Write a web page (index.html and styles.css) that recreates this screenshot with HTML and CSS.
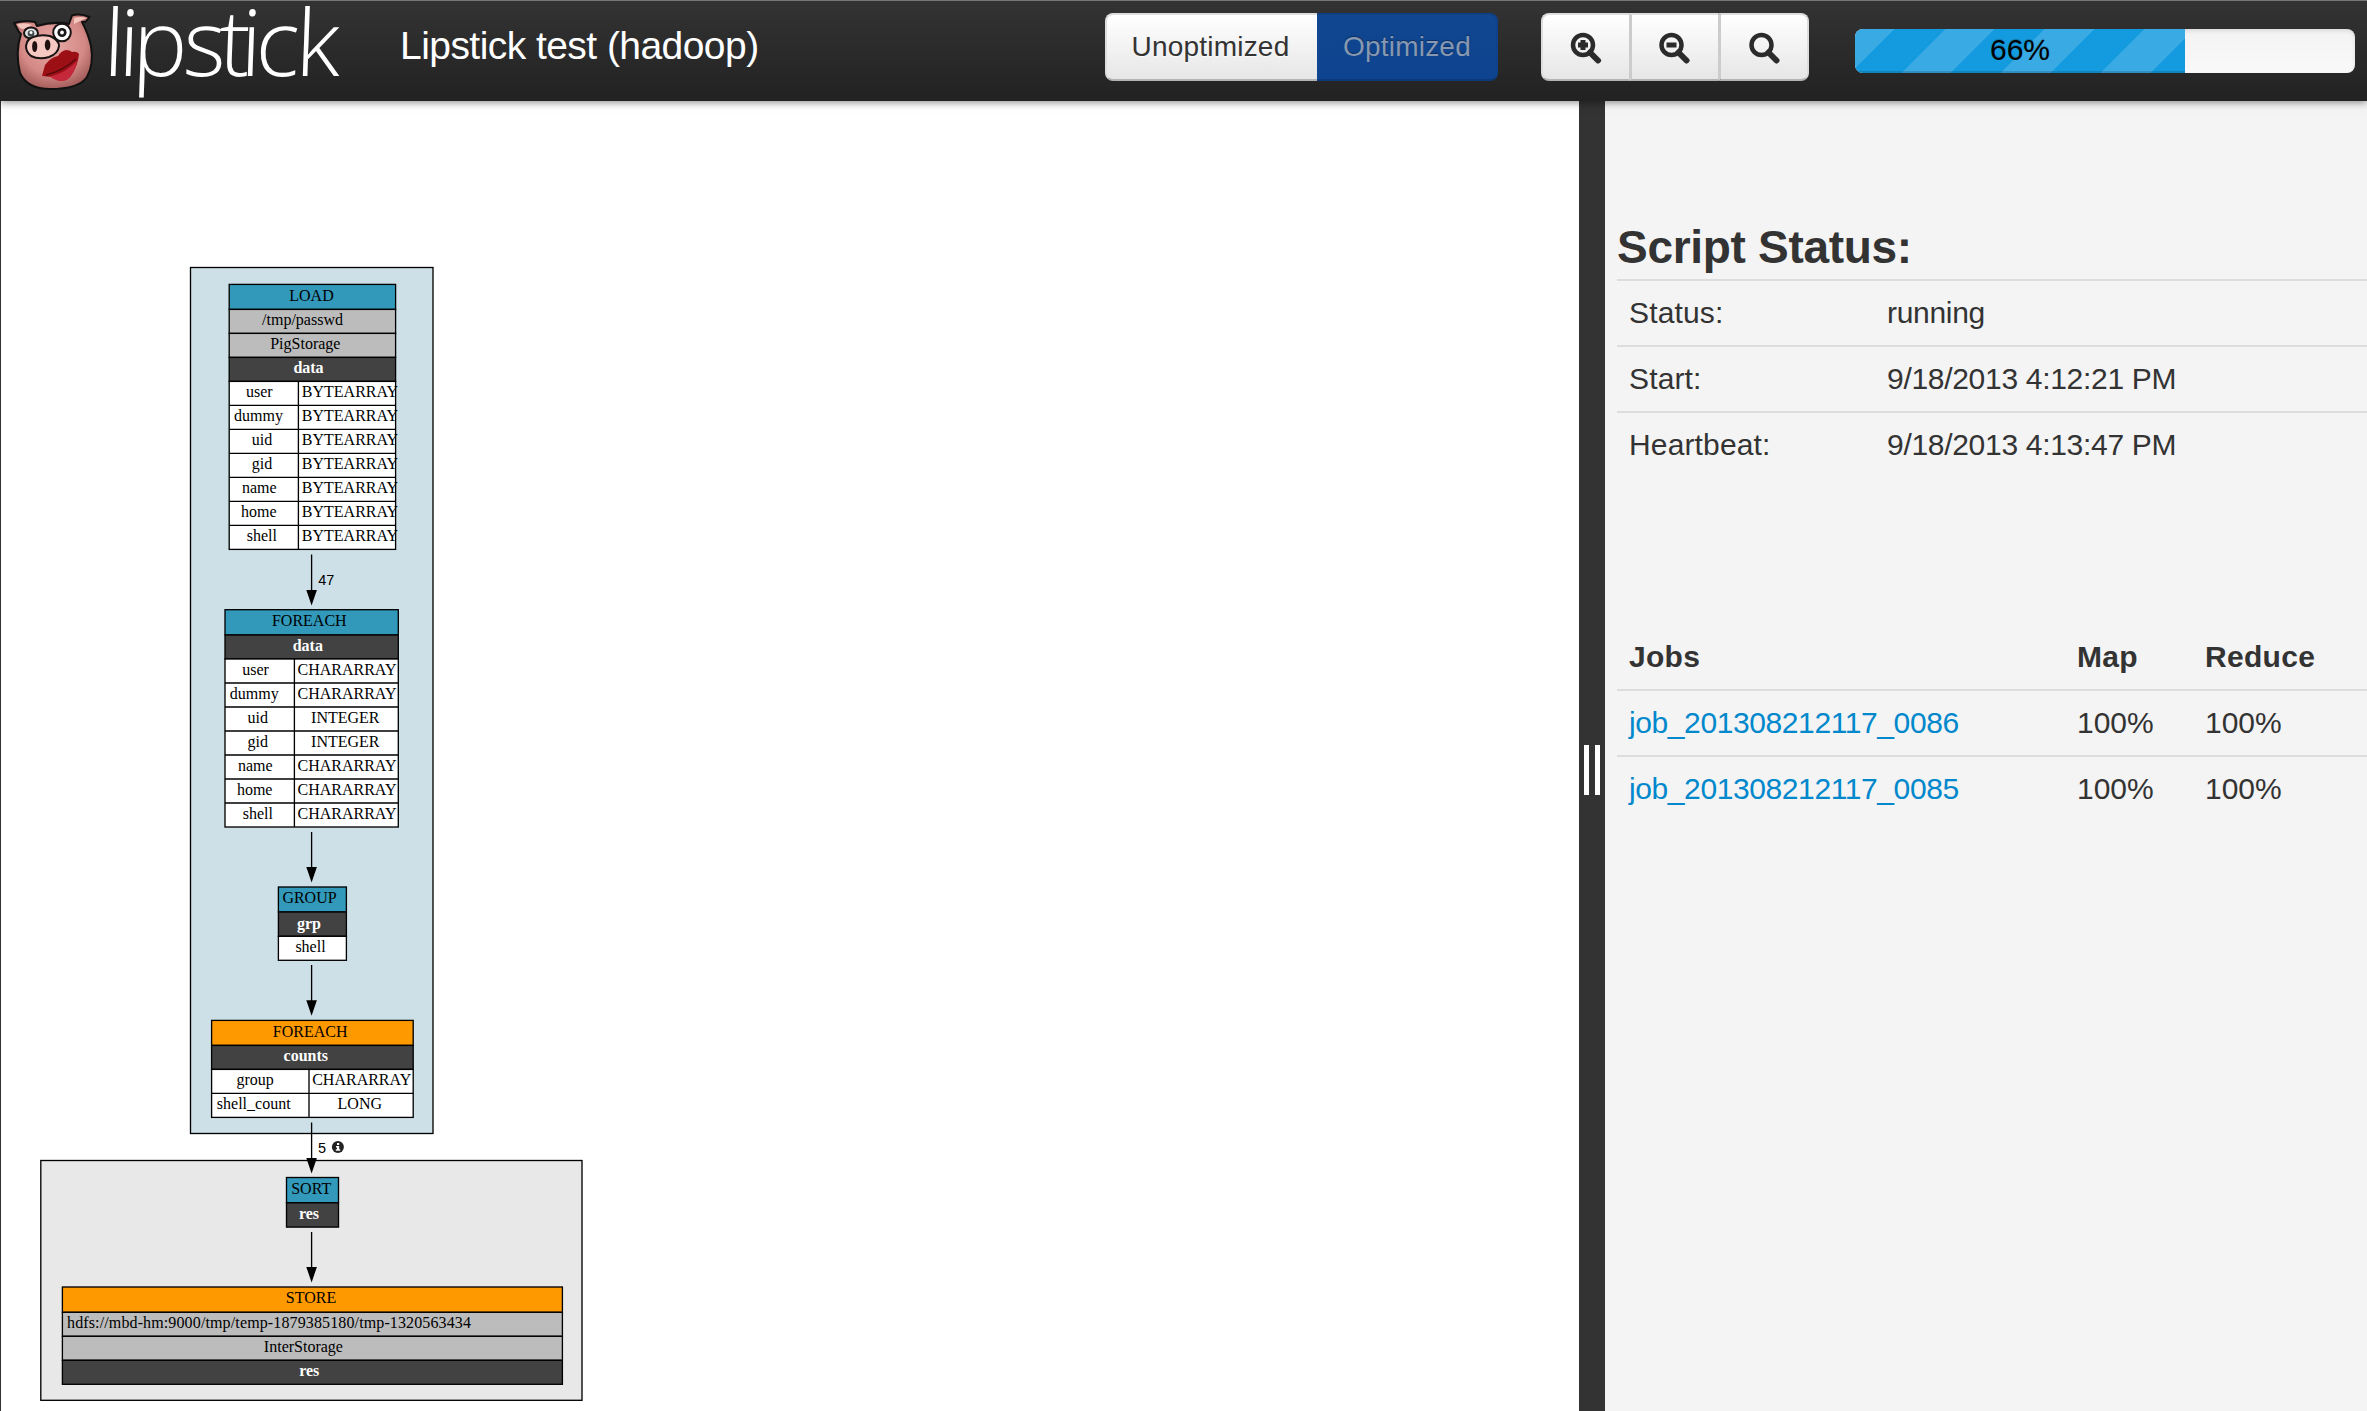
FILE: index.html
```html
<!DOCTYPE html>
<html lang="en">
<head>
<meta charset="utf-8">
<title>Lipstick test (hadoop)</title>
<link rel="stylesheet" href="styles.css">
</head>
<body>
<header class="navbar">
  <svg class="logo" width="350" height="100" viewBox="0 0 350 100" role="img" aria-label="lipstick">
    <defs>
      <radialGradient id="skin" cx=".5" cy=".4" r=".62">
        <stop offset="0" stop-color="#e9a9a5"/><stop offset=".65" stop-color="#d48a87"/><stop offset="1" stop-color="#a05a57"/>
      </radialGradient>
    </defs>
    <path class="pig-skin" d="M19 32 L14 23 Q24 20 35 22 L37 26 Q53 21 69 24 L72 15.500 Q80 13 89.500 17 L86 21.500 L82 22 Q88 33 91 46 Q94 64 87 77 Q79 89 50 89 Q27 89 20 73 Q15 52 21 34 Z"/>
    <path class="pig-ear" d="M17 24 Q25 22 32 25 L24 29 Q19 29 17 24 Z M74 18 Q81 16 87 18 L80 21 L74 24 Z"/>
    <ellipse class="pig-line" cx="31" cy="33" rx="7" ry="5.500" fill="#dfe3e3"/>
    <circle cx="31" cy="33.500" r="3.300" fill="#444b4e"/><circle cx="31" cy="32.500" r="1.500" fill="#fff"/>
    <circle class="pig-line" cx="62" cy="32.500" r="8.800" fill="#fff"/>
    <circle cx="62" cy="32.500" r="4.600" fill="#181818"/><circle cx="62" cy="32.500" r="1.900" fill="#fff"/>
    <path class="pig-line" d="M26 46 Q27 39 33 37 Q41 34 50 36 Q59 40 59 46 Q58 54 49 57 Q39 60 31 56 Q26 52 26 46 Z" fill="#f5c8c2"/>
    <ellipse cx="34.700" cy="46.500" rx="2.600" ry="5.600" fill="#20100f"/>
    <ellipse cx="47.600" cy="45" rx="2.800" ry="5.400" fill="#20100f"/>
    <path d="M42 76 L45 65 Q51 57 58 56 Q61 51 66 50 Q70 50 72 52 Q77 51 79 54 Q78 65 72 74 Q67 81 60 81 Q54 79 51 77 Z" fill="#9c0f15"/>
    <path d="M50 76.500 Q66 73 77 61 Q75 74 67 80 Q58 83 50 76.500 Z" fill="#c5283b"/>
    <path d="M46 75 Q63 71 76 59" fill="none" stroke="#56090e" stroke-width="1.300"/>
    <text class="wordmark" transform="translate(2.500 0) skewX(-2)" x="102.900 117.800 131.800 182.300 218.300 240 255 295" y="75.500">lipstick</text>
  </svg>
  <h1 class="script-name">Lipstick test (hadoop)</h1>
  <div class="btn-group plan-switch">
    <button class="btn">Unoptimized</button><button class="btn btn-active">Optimized</button>
  </div>
  <div class="btn-group zoom-tools">
    <button class="btn btn-icon" aria-label="Zoom in"><svg width="32" height="32" viewBox="0 0 32 32"><circle class="lens" cx="13" cy="13" r="10"/><path class="handle" d="M20 20.500 L28 28.500"/><path class="sign" d="M13 8v10M8 13h10"/></svg></button>
    <button class="btn btn-icon" aria-label="Zoom out"><svg width="32" height="32" viewBox="0 0 32 32"><circle class="lens" cx="12.500" cy="13" r="10"/><path class="handle" d="M19.500 20.500 L27.500 28.500"/><path class="sign" d="M7.500 13h10"/></svg></button>
    <button class="btn btn-icon" aria-label="Reset zoom"><svg width="32" height="32" viewBox="0 0 32 32"><circle class="lens" cx="13.500" cy="13" r="10"/><path class="handle" d="M20.500 20.500 L28.500 28.500"/></svg></button>
  </div>
  <div class="progress"><div class="bar" style="width:66%">66%</div></div>
</header>
<main class="workspace">
  <section class="canvas">
    <svg class="graph" width="1578" height="1310" viewBox="1 101 1578 1310">
      <rect class="cluster done" x="190.500" y="267.500" width="242.500" height="866"/>
      <rect class="cluster" x="40.800" y="1160.500" width="541.200" height="239.800"/>

      <g class="node">
        <rect class="op-map" x="229.200" y="284.400" width="166.400" height="25"/>
        <rect class="meta" x="229.200" y="309.400" width="166.400" height="24"/>
        <rect class="meta" x="229.200" y="333.400" width="166.400" height="24"/>
        <rect class="alias" x="229.200" y="357.400" width="166.400" height="24"/>
        <rect class="cells" x="229.200" y="381.400" width="166.400" height="168"/>
        <path class="rules" d="M298.400 381.400v168M229.200 405.400h166.400M229.200 429.400h166.400M229.200 453.400h166.400M229.200 477.400h166.400M229.200 501.400h166.400M229.200 525.400h166.400"/>
        <text x="311.500" y="300.700">LOAD</text><text x="302.500" y="325">/tmp/passwd</text><text x="305.300" y="349">PigStorage</text><text class="name" x="308.500" y="373">data</text>
        <text x="259.300" y="397">user</text><text x="350" y="397">BYTEARRAY</text>
        <text x="258.500" y="421">dummy</text><text x="350" y="421">BYTEARRAY</text>
        <text x="262" y="445">uid</text><text x="350" y="445">BYTEARRAY</text>
        <text x="262" y="469">gid</text><text x="350" y="469">BYTEARRAY</text>
        <text x="259.300" y="493">name</text><text x="350" y="493">BYTEARRAY</text>
        <text x="258.800" y="517">home</text><text x="350" y="517">BYTEARRAY</text>
        <text x="261.800" y="541">shell</text><text x="350" y="541">BYTEARRAY</text>
      </g>

      <g class="node">
        <rect class="op-map" x="225" y="609.700" width="173.300" height="25.300"/>
        <rect class="alias" x="225" y="635" width="173.300" height="24"/>
        <rect class="cells" x="225" y="659" width="173.300" height="168"/>
        <path class="rules" d="M294.400 659v168M225 683h173.300M225 707h173.300M225 731h173.300M225 755h173.300M225 779h173.300M225 803h173.300"/>
        <text x="309.300" y="626">FOREACH</text><text class="name" x="307.800" y="650.700">data</text>
        <text x="255.500" y="674.700">user</text><text x="347" y="674.700">CHARARRAY</text>
        <text x="254.300" y="698.700">dummy</text><text x="347" y="698.700">CHARARRAY</text>
        <text x="257.800" y="722.700">uid</text><text x="345.300" y="722.700">INTEGER</text>
        <text x="257.800" y="746.700">gid</text><text x="345.300" y="746.700">INTEGER</text>
        <text x="255.300" y="770.700">name</text><text x="347" y="770.700">CHARARRAY</text>
        <text x="254.700" y="794.700">home</text><text x="347" y="794.700">CHARARRAY</text>
        <text x="257.800" y="818.700">shell</text><text x="347" y="818.700">CHARARRAY</text>
      </g>

      <g class="node">
        <rect class="op-map" x="278.400" y="887" width="68" height="25"/>
        <rect class="alias" x="278.400" y="912" width="68" height="24.300"/>
        <rect class="cells" x="278.400" y="936.300" width="68" height="24"/>
        <text x="309.500" y="903">GROUP</text><text class="name" x="309" y="928.700">grp</text><text x="310.500" y="951.700">shell</text>
      </g>

      <g class="node">
        <rect class="op-reduce" x="211.600" y="1020.400" width="201.600" height="25"/>
        <rect class="alias" x="211.600" y="1045.400" width="201.600" height="24"/>
        <rect class="cells" x="211.600" y="1069.400" width="201.600" height="48"/>
        <path class="rules" d="M309 1069.400v48M211.600 1093.400h201.600"/>
        <text x="310.200" y="1037">FOREACH</text><text class="name" x="305.800" y="1061.300">counts</text>
        <text x="255.200" y="1085.300">group</text><text x="361.700" y="1085.300">CHARARRAY</text>
        <text x="253.700" y="1109.300">shell_count</text><text x="359.800" y="1109.300">LONG</text>
      </g>

      <g class="node">
        <rect class="op-map" x="286.500" y="1177.500" width="52" height="25.300"/>
        <rect class="alias" x="286.500" y="1202.800" width="52" height="24.300"/>
        <text x="311.200" y="1194">SORT</text><text class="name" x="309" y="1219.300">res</text>
      </g>

      <g class="node">
        <rect class="op-reduce" x="62.400" y="1287" width="500" height="25.300"/>
        <rect class="meta" x="62.400" y="1312.300" width="500" height="24"/>
        <rect class="meta" x="62.400" y="1336.300" width="500" height="24"/>
        <rect class="alias" x="62.400" y="1360.300" width="500" height="24"/>
        <text x="311" y="1303">STORE</text><text x="269" y="1328" textLength="404">hdfs://mbd-hm:9000/tmp/temp-1879385180/tmp-1320563434</text>
        <text x="303.400" y="1352.300">InterStorage</text><text class="name" x="309.200" y="1376.300">res</text>
      </g>

      <g class="edges">
        <path d="M311.600 554.500V592M311.600 832V869M311.600 965V1002M311.600 1122.400V1160M311.600 1232V1269"/>
        <path class="tip" d="M306.300 590h10.600l-5.300 15.500zM306.300 867h10.600l-5.300 15.500zM306.300 1000.300h10.600l-5.300 15.500zM306.300 1158h10.600l-5.300 15.500zM306.300 1267h10.600l-5.300 15.500z"/>
      </g>
      <text class="count" x="318.300" y="585">47</text>
      <text class="count" x="318" y="1152.700">5</text>
      <circle cx="337.900" cy="1147" r="6" fill="#222"/>
      <path d="M337 1143h2.200v2h-2.200zM336 1146h3.200v3.300h1v1.500h-4.400v-1.500h1.200v-1.800h-1z" fill="#fff"/>
    </svg>
  </section>
  <div class="splitter"><span class="grip"></span></div>
  <aside class="sidebar">
    <h2 class="panel-title">Script Status:</h2>
    <table class="table status">
      <tr><td class="label">Status:</td><td>running</td></tr>
      <tr><td class="label">Start:</td><td>9/18/2013 4:12:21 PM</td></tr>
      <tr><td class="label">Heartbeat:</td><td>9/18/2013 4:13:47 PM</td></tr>
    </table>
    <table class="table jobs">
      <thead><tr><th class="job">Jobs</th><th class="map">Map</th><th>Reduce</th></tr></thead>
      <tbody>
        <tr><td><a class="job-link">job_201308212117_0086</a></td><td>100%</td><td>100%</td></tr>
        <tr><td><a class="job-link">job_201308212117_0085</a></td><td>100%</td><td>100%</td></tr>
      </tbody>
    </table>
  </aside>
</main>
</body>
</html>
```
FILE: styles.css
```css
* { box-sizing: border-box; }
body {
  margin: 0;
  height: 1411px;
  display: flex;
  flex-direction: column;
  overflow: hidden;
  background: #fff;
  color: #333;
  font: 30px/40px "Liberation Sans", Arial, sans-serif;
}

/* top bar */
.navbar {
  position: relative;
  z-index: 1;
  flex: none;
  height: 101px;
  display: flex;
  border-top: 1px solid #777;
  background: linear-gradient(#333, #222);
  box-shadow: 0 1px 8px rgba(0, 0, 0, .5);
}
.logo { flex: none; display: block; margin-top: -1px; overflow: visible; }
.wordmark { font: 300 92px "Open Sans", "Noto Sans", sans-serif; fill: #fff; }
.pig-skin { fill: url(#skin); stroke: #111; stroke-width: 2; stroke-linejoin: round; }
.pig-ear { fill: #f3c6bd; }
.pig-line { stroke: #171313; stroke-width: 2; }
.script-name {
  width: 755px;
  margin: 25px 0 0;
  padding-left: 50px;
  color: #fff;
  font-size: 39px;
  line-height: 40px;
  font-weight: 400;
  letter-spacing: -.55px;
  white-space: nowrap;
}
.btn-group { display: flex; margin-top: 12px; height: 68px; }
.plan-switch { width: 393px; margin-right: 43px; }
.zoom-tools { width: 268px; margin-right: 46px; }
.btn {
  margin: 0;
  padding: 0;
  border: 2px solid #ddd;
  border-bottom-color: #b3b3b3;
  border-right-width: 0;
  background: linear-gradient(#fff, #e6e6e6);
  color: #333;
  font: 28px/40px "Liberation Sans", Arial, sans-serif;
  text-shadow: 0 1px 1px rgba(255, 255, 255, .75);
}
.btn:first-child { border-radius: 8px 0 0 8px; }
.btn:last-child { border-radius: 0 8px 8px 0; border-right-width: 2px; }
.plan-switch .btn { width: 212px; padding: 0 3px 0 0; letter-spacing: .2px; }
.plan-switch .btn-active {
  width: 181px;
  padding-right: 1px;
  border-color: #0f4084 #0e428d #0b3a7c #0f4793;
  background: linear-gradient(#10478f, #0e4390);
  color: #8798b2;
  text-shadow: 0 -1px 1px rgba(0, 0, 0, .35);
}
.btn-icon { flex: 1; display: flex; justify-content: center; align-items: center; padding-top: 1px; }
.btn-icon + .btn-icon { border-left: 3px solid #ccc; }
.lens { fill: none; stroke: #2b2b2b; stroke-width: 4.5; }
.handle { stroke: #2b2b2b; stroke-width: 6; stroke-linecap: round; }
.sign { stroke: #2b2b2b; stroke-width: 5; }
.progress {
  width: 500px;
  height: 44px;
  margin-top: 28px;
  border-radius: 8px;
  overflow: hidden;
  background: linear-gradient(#f3f3f3, #f9f9f9);
  box-shadow: inset 0 2px 4px rgba(0, 0, 0, .1);
}
.bar {
  height: 44px;
  padding-top: 1px;
  background: repeating-linear-gradient(135deg, #39aae4 0 28.28px, #149bdf 28.28px 63.64px, #39aae4 63.64px 70.71px);
  box-shadow: inset 0 -2px 0 rgba(0, 0, 0, .15);
  color: #000;
  text-align: center;
  text-shadow: 0 -1px 1px rgba(0, 0, 0, .25);
}

/* graph pane */
.workspace { flex: 1; min-height: 0; display: flex; }
.canvas { width: 1579px; border-left: 1px solid #333; background: #fff; }
.graph { display: block; }
.cluster { fill: #e8e8e8; stroke: #000; stroke-width: 1.33; }
.cluster.done { fill: #cee0e7; }
.node rect, .rules { stroke: #000; stroke-width: 1.33; }
.node text { font: 16px "Liberation Serif", "Times New Roman", serif; text-anchor: middle; fill: #000; }
.node .name { font-weight: 700; fill: #fff; }
.op-map { fill: #3299bb; }
.op-reduce { fill: #ff9900; }
.meta { fill: #bcbcbc; }
.alias { fill: #424242; }
.cells { fill: #fff; }
.edges path { stroke: #000; stroke-width: 1.33; }
.edges .tip { fill: #000; stroke: none; }
.count { font: 14.5px "Liberation Sans", Arial, sans-serif; fill: #000; }

.splitter { width: 26px; display: flex; align-items: center; justify-content: center; padding-top: 28px; background: #333; }
.grip { width: 16px; height: 50px; border: solid #fff; border-width: 0 5px; }

/* status panel */
.sidebar { flex: 1; padding: 120px 0 0 12px; background: #f4f4f4; }
.panel-title { margin: 0; height: 58px; padding-top: 3px; font-size: 46px; line-height: 46px; letter-spacing: -.3px; }
.table { width: 100%; border-spacing: 0; table-layout: fixed; }
.table td, .table th { height: 66px; padding: 12px; border-top: 2px solid #ddd; text-align: left; white-space: nowrap; }
.status td + td { letter-spacing: -.3px; }
.status .label { width: 258px; letter-spacing: .15px; }
.jobs { margin-top: 148px; }
.jobs th { border-top: 0; letter-spacing: .3px; }
.jobs thead th { height: 64px; }
.job { width: 448px; }
.map { width: 128px; }
.job-link { color: #08c; letter-spacing: -.4px; }
```
